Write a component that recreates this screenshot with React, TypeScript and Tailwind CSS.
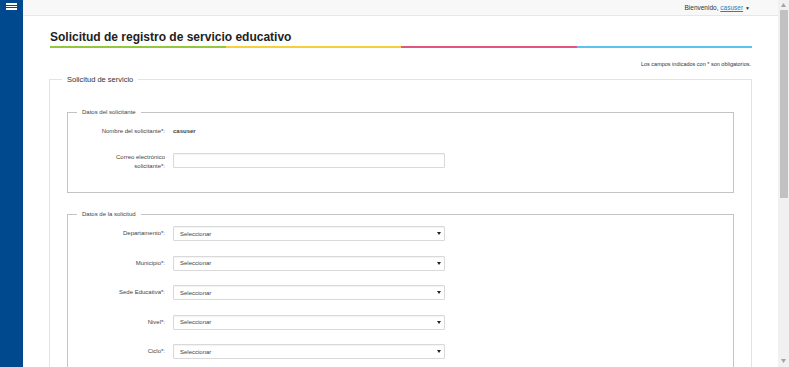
import React from 'react';

const SELECT_ROWS = ['Departamento*:', 'Municipio*:', 'Sede Educativa*:', 'Nivel*:', 'Ciclo*:'];

function SelectBox() {
  return (
    <div className="flex h-[15px] w-[272px] items-center justify-between rounded-[1px] border border-[#d9d9d9] bg-white pl-[6px] pr-[3px] shadow-[inset_0_1px_1px_rgba(0,0,0,0.05)]">
      <span className="text-[6px] leading-[8px] text-[#444]">Seleccionar</span>
      <svg width="4" height="3" viewBox="0 0 4 3">
        <path d="M0 0h4L2 3z" fill="#222" />
      </svg>
    </div>
  );
}

function Row({ label, children, top = false }: { label: React.ReactNode; children: React.ReactNode; top?: boolean }) {
  return (
    <div className={`flex gap-[8px] ${top ? 'items-start' : 'items-center'}`}>
      <div className="w-[97px] text-right text-[6px] leading-[9px] text-[#444]">{label}</div>
      {children}
    </div>
  );
}

export default function App() {
  return (
    <div className="flex h-[367px] w-[789px] overflow-hidden bg-white font-['Liberation_Sans',Arial,sans-serif] text-[#333]">
      {/* Sidebar */}
      <aside className="w-[23px] shrink-0 bg-[#00498f]">
        <div className="flex flex-col gap-[1px] pl-[6px] pt-[3px]">
          <span className="h-[1.5px] w-[11px] bg-white" />
          <span className="h-[1.5px] w-[11px] bg-white" />
          <span className="h-[1.5px] w-[11px] bg-white" />
        </div>
      </aside>

      {/* Main column */}
      <div className="flex min-w-0 flex-1 flex-col">
        <header className="flex h-[16px] shrink-0 items-center justify-end border-b border-[#e7e7e7] bg-[#f8f8f8] pr-[28px]">
          <span className="text-[6.5px] leading-[8px] text-[#333]">
            Bienvenido, <span className="text-[#337ab7] underline">casuser</span>
            <span className="ml-[2px] text-[5px]">▼</span>
          </span>
        </header>

        <main className="px-[26px]">
          <h1 className="ml-[1px] mt-[13.5px] text-[12px] font-bold leading-[14px] text-[#222]">
            Solicitud de registro de servicio educativo
          </h1>
          <div className="ml-[1px] mt-[2.5px] grid h-[2px] grid-cols-4">
            <div className="bg-[#93c83e]" />
            <div className="bg-[#f6d03a]" />
            <div className="bg-[#e0567f]" />
            <div className="bg-[#5cc3ee]" />
          </div>

          <p className="mr-[1px] mt-[12.5px] text-right text-[5.5px] leading-[7px] text-[#333]">
            Los campos indicados con * son obligatorios.
          </p>

          <fieldset className="mt-[7px] border border-[#e3e3e3] px-[17px] pb-[20px] pt-[24.5px]">
            <legend className="-ml-[5px] px-[5px] text-[7.5px] leading-[9px] text-[#333]">Solicitud de servicio</legend>

            <fieldset className="border border-[#c4c4c4] pb-[21px] pt-[10.5px]">
              <legend className="ml-[9px] px-[5px] text-[6px] leading-[8px] text-[#444]">Datos del solicitante</legend>
              <Row label="Nombre del solicitante*:">
                <span className="text-[6px] font-bold leading-[9px] text-[#444]">casuser</span>
              </Row>
              <div className="mt-[17.5px]">
                <Row top label={<>Correo electrónico<br />solicitante*:</>}>
                  <div className="h-[15px] w-[272px] rounded-[1px] border border-[#d9d9d9] bg-white shadow-[inset_0_1px_1px_rgba(0,0,0,0.05)]" />
                </Row>
              </div>
            </fieldset>

            <fieldset className="mt-[17px] border border-[#c4c4c4] pb-[20px] pt-[8px]">
              <legend className="ml-[9px] px-[5px] text-[6px] leading-[8px] text-[#444]">Datos de la solicitud</legend>
              <div className="flex flex-col gap-[14.5px]">
                {SELECT_ROWS.map(l => (
                  <Row key={l} label={l}>
                    <SelectBox />
                  </Row>
                ))}
              </div>
            </fieldset>
          </fieldset>
        </main>
      </div>

      {/* Scrollbar */}
      <div className="flex w-[11px] shrink-0 flex-col items-center bg-[#f1f1f1]">
        <svg width="5" height="4" viewBox="0 0 5 4" className="mt-[3px]">
          <path d="M2.5 0L5 4H0z" fill="#a3a3a3" />
        </svg>
        <div className="mt-[3px] h-[188px] w-[8px] bg-[#c1c1c1]" />
        <div className="flex-1" />
        <svg width="5" height="4" viewBox="0 0 5 4" className="mb-[4px]">
          <path d="M0 0h5L2.5 4z" fill="#a3a3a3" />
        </svg>
      </div>
    </div>
  );
}
